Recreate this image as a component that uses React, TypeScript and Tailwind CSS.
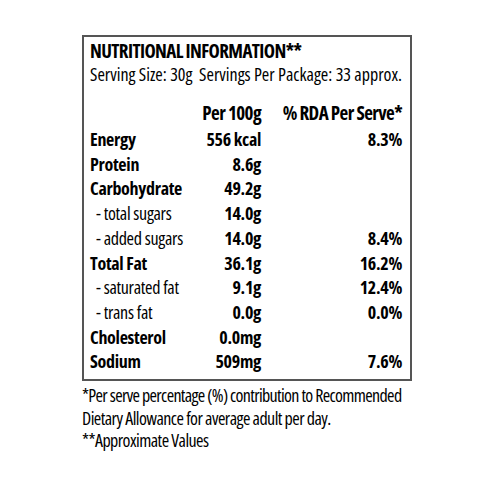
const rows = [
  { label: "Energy", bold: true, per100: "556 kcal", rda: "8.3%" },
  { label: "Protein", bold: true, per100: "8.6g", rda: "" },
  { label: "Carbohydrate", bold: true, per100: "49.2g", rda: "" },
  { label: "- total sugars", bold: false, per100: "14.0g", rda: "" },
  { label: "- added sugars", bold: false, per100: "14.0g", rda: "8.4%" },
  { label: "Total Fat", bold: true, per100: "36.1g", rda: "16.2%" },
  { label: "- saturated fat", bold: false, per100: "9.1g", rda: "12.4%" },
  { label: "- trans fat", bold: false, per100: "0.0g", rda: "0.0%" },
  { label: "Cholesterol", bold: true, per100: "0.0mg", rda: "" },
  { label: "Sodium", bold: true, per100: "509mg", rda: "7.6%" },
];

const NutritionLabel = () => {
  return (
    <div className="h-[346px] w-[330px] border-2 border-[#555] pl-[6px] pr-[8px] pt-[2px]">
      <p className="text-[19px] font-bold leading-[24px] tracking-[-0.6px]">NUTRITIONAL INFORMATION**</p>
      <p className="whitespace-pre text-[18px] leading-[23px] tracking-[0px]">
        Serving Size: 30g  Servings Per Package: 33 approx.
      </p>

      <div className="mt-[15px] grid grid-cols-[1fr_72px_141px] text-[19px] font-bold leading-[24px] tracking-[-0.6px]">
        <span />
        <span className="whitespace-nowrap text-right">Per 100g</span>
        <span className="whitespace-nowrap text-right">% RDA Per Serve*</span>
      </div>

      <div className="mt-[2px] grid grid-cols-[1fr_72px_141px] text-[18px] leading-[24.7px] tracking-[-0.3px]">
        {rows.map((row) => (
          <div key={row.label} className="contents">
            <span className={row.bold ? "whitespace-nowrap font-bold" : "whitespace-nowrap pl-[6px]"}>{row.label}</span>
            <span className="whitespace-nowrap text-right font-bold">{row.per100}</span>
            <span className="whitespace-nowrap text-right font-bold">{row.rda}</span>
          </div>
        ))}
      </div>
    </div>
  );
};

export default function App() {
  return (
    <div className="flex h-[500px] w-[500px] flex-col overflow-hidden bg-white pl-[82px] pt-[35px] font-['Open_Sans',sans-serif] text-black [font-stretch:condensed]">
      <NutritionLabel />
      <div className="mt-[3px] whitespace-nowrap text-[18px] leading-[22.5px] tracking-[-0.55px]">
        <p className="tracking-[-0.66px]">*Per serve percentage (%) contribution to Recommended</p>
        <p>Dietary Allowance for average adult per day.</p>
        <p>**Approximate Values</p>
      </div>
    </div>
  );
}
